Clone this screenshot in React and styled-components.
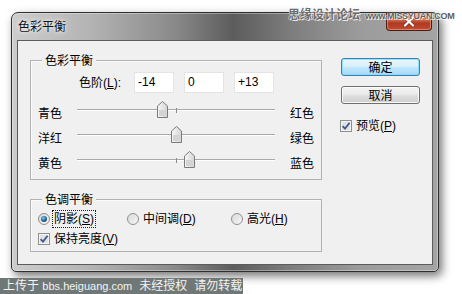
import React from 'react'
import styled, { createGlobalStyle } from 'styled-components'

const GlobalStyle = createGlobalStyle`
  html, body {
    margin: 0;
    padding: 0;
    background: #ffffff;
  }
  body {
    font-family: "Liberation Sans", "Noto Sans CJK SC", sans-serif;
    font-size: 12px;
    color: #000;
  }
`

const SLIDER_WIDTH = 198

const sliders = [
  { left: '青色', right: '红色', value: -14 },
  { left: '洋红', right: '绿色', value: 0 },
  { left: '黄色', right: '蓝色', value: 13 },
]

const App = () => {
  return (
    <>
      <GlobalStyle />
      <Page>
        <Window>
          <TitleBar>
            <Title>色彩平衡</Title>
            <CloseButton>
              <svg width="12" height="11" viewBox="0 0 12 11">
                <path d="M2 1.5 L10 9.5 M10 1.5 L2 9.5" stroke="#3a1a14" strokeWidth="3.4" strokeLinecap="round" opacity="0.45" />
                <path d="M2 1.5 L10 9.5 M10 1.5 L2 9.5" stroke="#ffffff" strokeWidth="2.2" strokeLinecap="round" />
              </svg>
            </CloseButton>
          </TitleBar>
          <Client>
            <MainColumn>
              <Group height={120}>
                <GroupTitle>色彩平衡</GroupTitle>
                <LevelRow>
                  <LevelLabel>色阶(<u>L</u>):</LevelLabel>
                  <LevelInput>-14</LevelInput>
                  <LevelInput>0</LevelInput>
                  <LevelInput>+13</LevelInput>
                </LevelRow>
                <SliderList>
                  {sliders.map((s) => (
                    <SliderRow key={s.left}>
                      <SideLabel>{s.left}</SideLabel>
                      <Track>
                        <Tick />
                        <Thumb style={{ left: `${Math.round(((s.value + 100) / 200) * SLIDER_WIDTH) - 5}px` }}>
                          <svg width="11" height="17" viewBox="0 0 11 17">
                            <defs>
                              <linearGradient id={`tg${s.left}`} x1="0" y1="0" x2="1" y2="0">
                                <stop offset="0" stopColor="#f6f6f6" />
                                <stop offset="1" stopColor="#d6d6d6" />
                              </linearGradient>
                            </defs>
                            <path d="M0.5 16.5 V5 L5.5 0.5 L10.5 5 V16.5 Z" fill={`url(#tg${s.left})`} stroke="#7a7a7a" />
                            <path d="M2 15 V9 H9 V15 Z" fill="#d4d4d4" />
                          </svg>
                        </Thumb>
                      </Track>
                      <EndLabel>{s.right}</EndLabel>
                    </SliderRow>
                  ))}
                </SliderList>
              </Group>
              <Group height={53} $gap={19}>
                <GroupTitle>色调平衡</GroupTitle>
                <ToneRows>
                  <RadioRow>
                    <Option>
                      <RadioMark checked />
                      <FocusText>阴影(<u>S</u>)</FocusText>
                    </Option>
                    <Option>
                      <RadioMark />
                      <OptionText>中间调(<u>D</u>)</OptionText>
                    </Option>
                    <Option>
                      <RadioMark />
                      <OptionText>高光(<u>H</u>)</OptionText>
                    </Option>
                  </RadioRow>
                  <Option>
                    <CheckMark />
                    <OptionText>保持亮度(<u>V</u>)</OptionText>
                  </Option>
                </ToneRows>
              </Group>
            </MainColumn>
            <SideColumn>
              <Button $primary>确定</Button>
              <Button>取消</Button>
              <PreviewOption>
                <CheckMark />
                <OptionText>预览(<u>P</u>)</OptionText>
              </PreviewOption>
            </SideColumn>
          </Client>
        </Window>
        <TopMark>
          思缘设计论坛 <small>www.MISSYUAN.COM</small>
        </TopMark>
        <Footer>
          <span>上传于 <Site>bbs.heiguang.com</Site></span>
          <span>未经授权</span>
          <span>请勿转载</span>
        </Footer>
      </Page>
    </>
  )
}

const RadioMark = ({ checked }) => (
  <MarkBox>
    <svg width="12" height="12" viewBox="0 0 12 12">
      <defs>
        <linearGradient id={checked ? 'rOn' : 'rOff'} x1="0" y1="0" x2="1" y2="1">
          <stop offset="0" stopColor="#d8d8d8" />
          <stop offset="1" stopColor="#f8f8f8" />
        </linearGradient>
        <radialGradient id="rDot" cx="0.4" cy="0.35" r="0.7">
          <stop offset="0" stopColor="#9fd2f2" />
          <stop offset="0.5" stopColor="#2a78b4" />
          <stop offset="1" stopColor="#143e66" />
        </radialGradient>
      </defs>
      <circle cx="6" cy="6" r="5.5" fill={`url(#${checked ? 'rOn' : 'rOff'})`} stroke="#8e8f8f" />
      {checked && <circle cx="6" cy="6" r="3" fill="url(#rDot)" />}
    </svg>
  </MarkBox>
)

const CheckMark = () => (
  <MarkBox>
    <svg width="12" height="12" viewBox="0 0 12 12">
      <rect x="0.5" y="0.5" width="11" height="11" fill="#f4f4f4" stroke="#8e8f8f" />
      <rect x="2" y="2" width="8" height="8" fill="#e2e2e2" />
      <path d="M2.6 6.2 L5 8.6 L9.6 2.8" fill="none" stroke="#3f5a8e" strokeWidth="1.8" />
    </svg>
  </MarkBox>
)

export default App

const Page = styled.div`
  position: relative;
  width: 462px;
  height: 294px;
  padding: 12px 0 0 11px;
  box-sizing: border-box;
  overflow: hidden;
`

const Window = styled.div`
  width: 428px;
  height: 260px;
  box-sizing: border-box;
  border: 1px solid #2f2f2f;
  border-radius: 7px 7px 5px 5px;
  background: linear-gradient(90deg, #cdcdcd 0%, #b4b4b4 18%, #8a8a8a 38%, #5c5c5c 52%, #7e7e7e 66%, #9c9c9c 82%, #a4a4a4 100%);
  box-shadow: inset 0 0 0 1px rgba(255, 255, 255, 0.35), 3px 4px 10px rgba(0, 0, 0, 0.55);
  display: flex;
  flex-direction: column;
`

const TitleBar = styled.div`
  height: 27px;
  display: flex;
  align-items: flex-start;
  justify-content: space-between;
  padding: 0 6px 0 6px;
`

const Title = styled.span`
  margin-top: 5px;
  font-family: "Noto Sans CJK SC", sans-serif;
  font-size: 12px;
  line-height: 16px;
  color: #111;
  text-shadow: 0 0 6px rgba(255, 255, 255, 0.9), 0 0 3px rgba(255, 255, 255, 0.9);
`

const CloseButton = styled.div`
  width: 46px;
  height: 18px;
  box-sizing: border-box;
  border: 1px solid #4a1c14;
  border-top: none;
  border-radius: 0 0 4px 4px;
  background: linear-gradient(180deg, #e0a08e 0%, #cf6a52 40%, #b03a22 60%, #c24c30 100%);
  box-shadow: inset 0 0 0 1px rgba(255, 200, 180, 0.45);
  display: flex;
  align-items: center;
  justify-content: center;
`

const Client = styled.div`
  flex: 1;
  margin: 0 5px 6px 5px;
  border: 1px solid #5b5b5b;
  background: #f0f0f0;
  display: flex;
  padding-left: 12px;
  gap: 19px;
`

const MainColumn = styled.div`
  padding-top: 19px;
  width: 292px;
  display: flex;
  flex-direction: column;
`

const Group = styled.div`
  position: relative;
  height: ${(p) => p.height}px;
  margin-top: ${(p) => p.$gap || 0}px;
  box-sizing: border-box;
  border: 1px solid #b2b2b2;
  box-shadow: inset 1px 1px 0 #fbfbfb;
  padding-left: 7px;
`

const GroupTitle = styled.span`
  position: absolute;
  top: -9px;
  left: 11px;
  padding: 0 3px;
  background: #f0f0f0;
  font-family: "Noto Sans CJK SC", sans-serif;
  line-height: 16px;
`

const LevelRow = styled.div`
  display: flex;
  align-items: center;
  gap: 10px;
  padding: 11px 0 0 41px;
`

const LevelLabel = styled.span`
  width: 44px;
  margin-right: 1px;
  line-height: 16px;
`

const LevelInput = styled.div`
  width: 40px;
  height: 21px;
  box-sizing: border-box;
  background: #ffffff;
  border: 1px solid #e4e4e4;
  padding-left: 3px;
  font-family: "Liberation Sans", sans-serif;
  font-size: 12px;
  line-height: 19px;
`

const SliderList = styled.div`
  margin-top: 7px;
  display: flex;
  flex-direction: column;
`

const SliderRow = styled.div`
  height: 25px;
  display: grid;
  grid-template-columns: 39px ${SLIDER_WIDTH}px 1fr;
  align-items: center;
`

const SideLabel = styled.span`
  font-family: "Noto Sans CJK SC", sans-serif;
  line-height: 16px;
`

const EndLabel = styled(SideLabel)`
  padding-left: 15px;
`

const Track = styled.div`
  position: relative;
  height: 25px;
  &::before {
    content: '';
    position: absolute;
    left: 0;
    right: 0;
    top: 9px;
    height: 1px;
    background: #a9a9a9;
    box-shadow: 0 1px 0 #ffffff;
  }
`

const Tick = styled.div`
  position: absolute;
  left: 99px;
  top: 8px;
  width: 1px;
  height: 5px;
  background: #8c8c8c;
`

const Thumb = styled.div`
  position: absolute;
  top: 1px;
  width: 11px;
  height: 17px;
  svg {
    display: block;
  }
`

const ToneRows = styled.div`
  padding-top: 10px;
  display: flex;
  flex-direction: column;
  gap: 2px;
`

const RadioRow = styled.div`
  display: grid;
  grid-template-columns: 89px 104px auto;
`

const Option = styled.div`
  height: 18px;
  display: flex;
  align-items: center;
  gap: 2px;
`

const MarkBox = styled.span`
  width: 12px;
  height: 12px;
  svg {
    display: block;
  }
`

const OptionText = styled.span`
  line-height: 16px;
  padding: 0 1px;
  border: 1px solid transparent;
`

const FocusText = styled(OptionText)`
  border: 1px dotted #202020;
`

const SideColumn = styled.div`
  padding-top: 17px;
  display: flex;
  flex-direction: column;
  gap: 10px;
`

const Button = styled.div`
  width: 79px;
  height: 18px;
  box-sizing: border-box;
  border-radius: 3px;
  border: 1px solid ${(p) => (p.$primary ? '#3c7fb1' : '#707070')};
  background: ${(p) =>
    p.$primary
      ? 'linear-gradient(180deg, #eaf6fd 0%, #d9f0fc 45%, #bee6fd 55%, #a7d9f5 100%)'
      : 'linear-gradient(180deg, #f2f2f2 0%, #ebebeb 45%, #dddddd 55%, #cfcfcf 100%)'};
  box-shadow: inset 0 0 0 1px ${(p) => (p.$primary ? 'rgba(120, 220, 255, 0.7)' : 'rgba(255, 255, 255, 0.8)')};
  display: flex;
  align-items: center;
  justify-content: center;
  font-family: "Noto Sans CJK SC", sans-serif;
  line-height: 16px;
`

const PreviewOption = styled(Option)`
  margin: 3px 0 0 -1px;
`

const TopMark = styled.div`
  position: absolute;
  top: 6px;
  left: 288px;
  display: flex;
  align-items: baseline;
  gap: 5px;
  font-family: "Noto Sans CJK SC", sans-serif;
  font-size: 12px;
  font-weight: 700;
  line-height: 16px;
  color: #6c6c6c;
  white-space: nowrap;
  text-shadow: 0 0 1px #ffffff, 0 0 1px #ffffff, 1px 1px 0 rgba(255, 255, 255, 0.8);
  small {
    font-family: "Liberation Sans", sans-serif;
    font-size: 9px;
    font-weight: 700;
    color: #5e5e5e;
    letter-spacing: -0.3px;
  }
`

const Footer = styled.div`
  margin: 6px 0 0 -11px;
  width: 243px;
  height: 16px;
  background: #6f7876;
  color: #f4f4f4;
  display: flex;
  gap: 7px;
  font-family: "Liberation Sans", "Noto Sans CJK SC", sans-serif;
  font-size: 12px;
  line-height: 16px;
  padding-left: 3px;
  box-sizing: border-box;
  white-space: nowrap;
  overflow: hidden;
`

const Site = styled.span`
  font-size: 11px;
`
